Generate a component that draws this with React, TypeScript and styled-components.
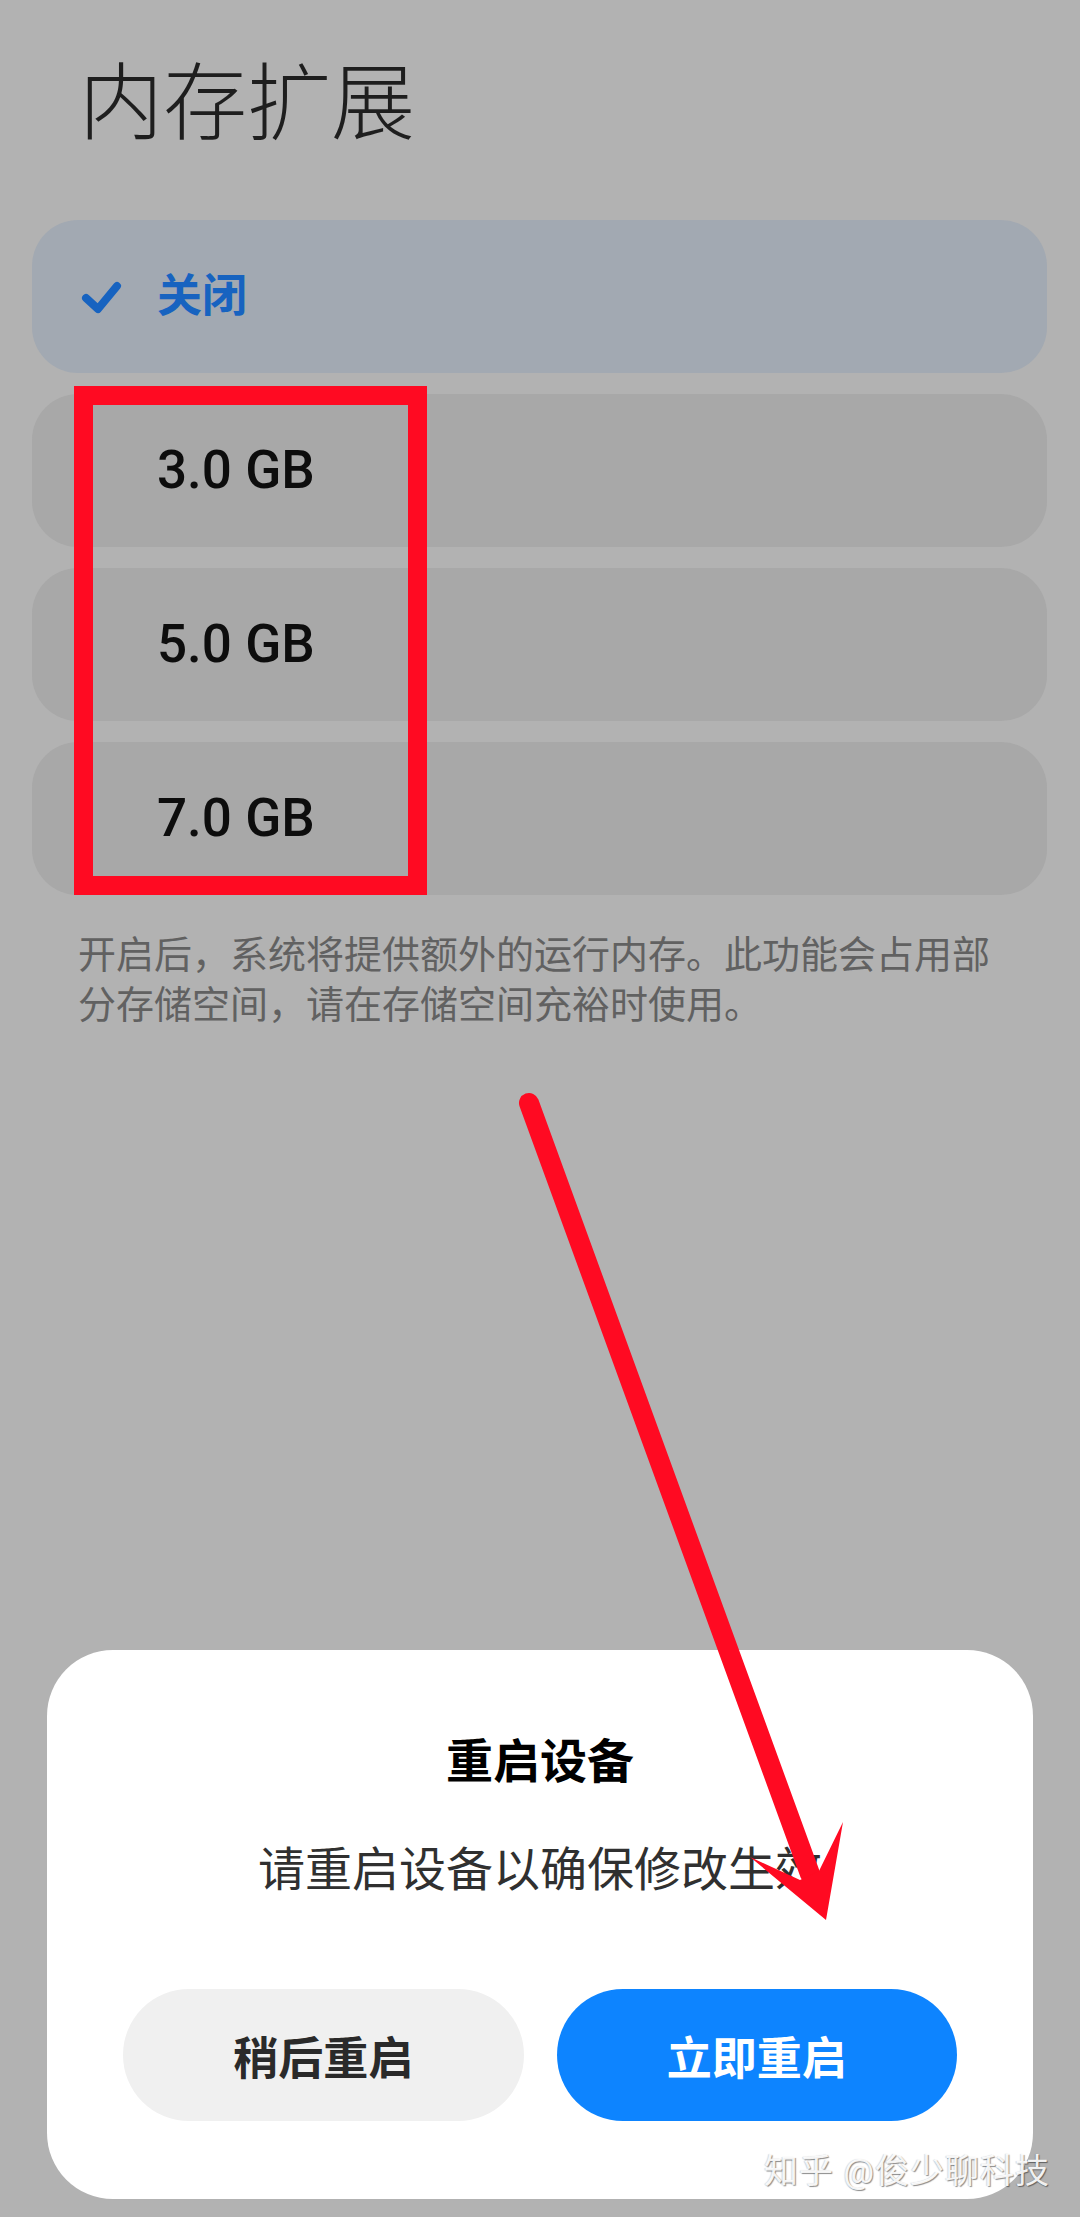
import React from 'react';
import styled, { createGlobalStyle } from 'styled-components';

const GlobalStyle = createGlobalStyle`
  html, body {
    margin: 0;
    padding: 0;
    background: #b2b2b2;
  }
  * {
    box-sizing: border-box;
  }
`;

const Screen = styled.div`
  position: relative;
  width: 1080px;
  height: 2217px;
  overflow: hidden;
  background: #b2b2b2;
  font-family: Roboto, "Noto Sans CJK SC", sans-serif;
`;

const Content = styled.div`
  display: flex;
  flex-direction: column;
  padding: 63px 33px 0 32px;
`;

const Title = styled.h1`
  margin: 0 0 73px 47px;
  font-size: 84px;
  line-height: 84px;
  font-weight: 300;
  color: #1e1e1e;
`;

const Options = styled.div`
  display: flex;
  flex-direction: column;
  gap: 21px;
`;

const Option = styled.div<{ $selected?: boolean }>`
  display: flex;
  align-items: center;
  gap: 35px;
  height: 153px;
  padding-left: 48px;
  border-radius: 46px;
  background: ${({ $selected }) => ($selected ? '#a2a9b2' : '#a8a8a8')};
`;

const CheckSlot = styled.div`
  width: 42px;
  height: 38px;
  display: flex;
  align-items: center;
  justify-content: center;
`;

const OptionLabel = styled.span<{ $selected?: boolean }>`
  font-size: ${({ $selected }) => ($selected ? '45px' : '53px')};
  font-weight: ${({ $selected }) => ($selected ? 600 : 500)};
  color: ${({ $selected }) => ($selected ? '#1763c0' : '#0d0d0d')};
  line-height: 1;
`;

const Description = styled.p`
  margin: 35px 0 0 46px;
  width: 926px;
  font-size: 38px;
  line-height: 50px;
  color: #616161;
`;

const Dialog = styled.div`
  position: absolute;
  left: 47px;
  right: 47px;
  bottom: 18px;
  height: 549px;
  background: #ffffff;
  border-radius: 66px;
  display: flex;
  flex-direction: column;
  align-items: center;
  padding: 82px 76px 78px;
`;

const DialogTitle = styled.div`
  font-size: 47px;
  line-height: 60px;
  font-weight: 700;
  color: #000;
`;

const DialogMessage = styled.div`
  margin-top: 48px;
  font-size: 47px;
  line-height: 60px;
  color: #303030;
`;

const Buttons = styled.div`
  margin-top: 89px;
  width: 100%;
  display: grid;
  grid-template-columns: 1fr 1fr;
  gap: 33px;
`;

const Button = styled.div<{ $primary?: boolean }>`
  height: 132px;
  border-radius: 66px;
  display: flex;
  align-items: center;
  justify-content: center;
  font-size: 45px;
  font-weight: 600;
  background: ${({ $primary }) => ($primary ? '#0d84ff' : '#f0f0f0')};
  color: ${({ $primary }) => ($primary ? '#ffffff' : '#2a2a2a')};
`;

const Highlight = styled.div`
  position: absolute;
  left: 74px;
  top: 386px;
  width: 353px;
  height: 509px;
  border: 19px solid #ff0a22;
`;

const ArrowLayer = styled.svg`
  position: absolute;
  left: 0;
  top: 0;
  pointer-events: none;
`;

const Watermark = styled.div`
  position: absolute;
  right: 30px;
  top: 2146px;
  font-size: 34px;
  line-height: 50px;
  color: rgba(255, 255, 255, 0.92);
  text-shadow: 1px 1px 1px rgba(0, 0, 0, 0.45), -1px 0 1px rgba(0, 0, 0, 0.15);
  letter-spacing: 1px;
`;

const Check = () => (
  <svg width="42" height="38" viewBox="0 0 42 38">
    <polyline
      points="6,20 18,31 37,8"
      fill="none"
      stroke="#1763c0"
      strokeWidth="8"
      strokeLinecap="round"
      strokeLinejoin="round"
    />
  </svg>
);

const options = ['关闭', '3.0 GB', '5.0 GB', '7.0 GB'];

const App: React.FC<{}> = () => {
  return (
    <Screen>
      <GlobalStyle />
      <Content>
        <Title>内存扩展</Title>
        <Options>
          {options.map((label, i) => (
            <Option key={label} $selected={i === 0}>
              <CheckSlot>{i === 0 && <Check />}</CheckSlot>
              <OptionLabel $selected={i === 0}>{label}</OptionLabel>
            </Option>
          ))}
        </Options>
        <Description>
          开启后，系统将提供额外的运行内存。此功能会占用部分存储空间，请在存储空间充裕时使用。
        </Description>
      </Content>

      <Highlight />

      <Dialog>
        <DialogTitle>重启设备</DialogTitle>
        <DialogMessage>请重启设备以确保修改生效</DialogMessage>
        <Buttons>
          <Button>稍后重启</Button>
          <Button $primary>立即重启</Button>
        </Buttons>
      </Dialog>

      <ArrowLayer width="1080" height="2217" viewBox="0 0 1080 2217">
        <line x1="529" y1="1103" x2="810" y2="1874" stroke="#ff0a22" strokeWidth="20" strokeLinecap="round" />
        <polygon points="800,1880 750,1857 826,1920 843,1822 819,1871" fill="#ff0a22" />
      </ArrowLayer>

      <Watermark>知乎 @俊少聊科技</Watermark>
    </Screen>
  );
};

export default App;
